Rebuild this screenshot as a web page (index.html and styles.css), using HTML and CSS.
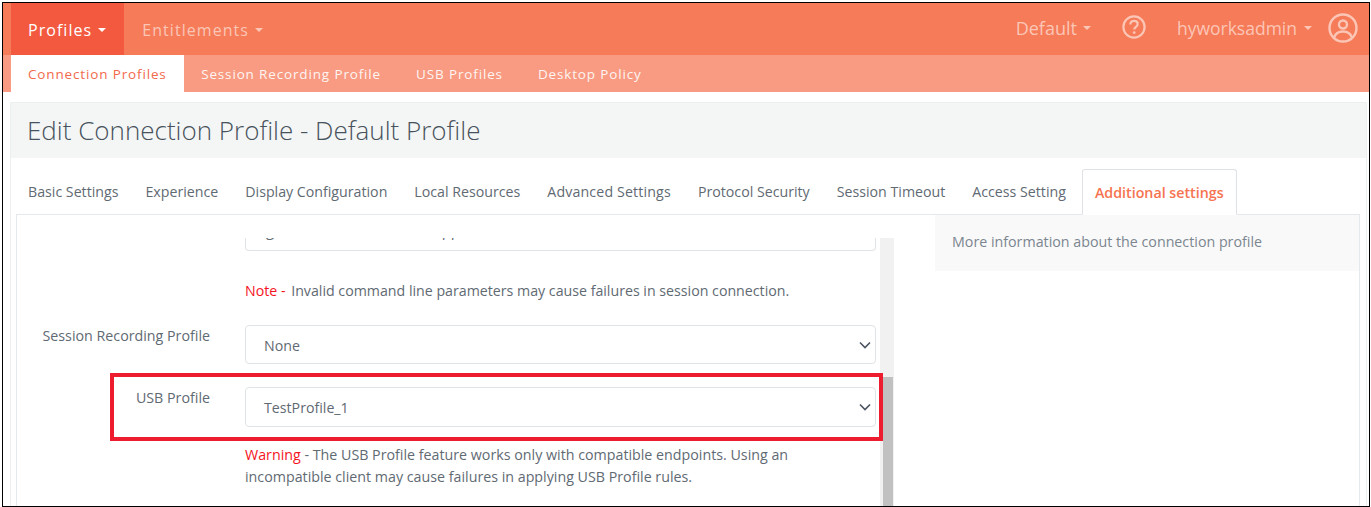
FILE: index.html
```html
<!DOCTYPE html>
<html lang="en">
<head>
<meta charset="utf-8">
<title>Edit Connection Profile</title>
<link rel="stylesheet" href="styles.css">
</head>
<body>
<div class="frame">
  <header class="topbar">
    <nav class="topnav">
      <a class="topitem active">Profiles <i class="caret"></i></a>
      <a class="topitem">Entitlements <i class="caret"></i></a>
    </nav>
    <div class="topright">
      <a class="rightitem default">Default <i class="caret"></i></a>
      <svg class="help" viewBox="0 0 24 24" width="24" height="24"><circle cx="12" cy="12" r="10.6" fill="none" stroke="currentColor" stroke-width="2.2"/><path d="M8.4 9.4c0-2.2 1.6-3.5 3.7-3.5s3.6 1.2 3.6 3.1c0 2.8-3.5 2.8-3.5 5.6" fill="none" stroke="currentColor" stroke-width="2.2"/><circle cx="12.2" cy="17.6" r="1.4" fill="currentColor"/></svg>
      <a class="rightitem user">hyworksadmin <i class="caret"></i></a>
      <svg class="avatar" viewBox="0 0 30 30" width="30" height="30"><circle cx="15" cy="15" r="13.5" fill="none" stroke="currentColor" stroke-width="2.4"/><circle cx="15" cy="11.5" r="4" fill="none" stroke="currentColor" stroke-width="2.4"/><path d="M6 24.5c1.5-4.2 5-6 9-6s7.500 1.800 9 6" fill="none" stroke="currentColor" stroke-width="2.4"/></svg>
    </div>
  </header>
  <nav class="subnav">
    <a class="subitem active">Connection Profiles</a>
    <a class="subitem">Session Recording Profile</a>
    <a class="subitem">USB Profiles</a>
    <a class="subitem">Desktop Policy</a>
  </nav>
  <main class="content">
    <div class="titlebar"><h1 class="title">Edit Connection Profile - Default Profile</h1></div>
    <ul class="tabs">
      <li class="tab">Basic Settings</li>
      <li class="tab">Experience</li>
      <li class="tab">Display Configuration</li>
      <li class="tab">Local Resources</li>
      <li class="tab wide">Advanced Settings</li>
      <li class="tab">Protocol Security</li>
      <li class="tab">Session Timeout</li>
      <li class="tab">Access Setting</li>
      <li class="tab current">Additional settings</li>
    </ul>
    <div class="panel">
      <div class="formwrap">
        <div class="form">
          <div class="cutfield"><span class="cuttext">g                               ,           pp</span></div>
          <p class="note first"><span class="red notelabel">Note - </span>Invalid command line parameters may cause failures in session connection.</p>
          <div class="row srp">
            <label class="label">Session Recording Profile</label>
            <div class="select">None<svg class="chev" viewBox="0 0 12 8" width="12" height="8"><path d="M1 1.500l5 5 5-5" fill="none" stroke="currentColor" stroke-width="1.600"/></svg></div>
          </div>
          <div class="row usb">
            <label class="label">USB Profile</label>
            <div class="select tall">TestProfile_1<svg class="chev" viewBox="0 0 12 8" width="12" height="8"><path d="M1 1.500l5 5 5-5" fill="none" stroke="currentColor" stroke-width="1.600"/></svg></div>
            <div class="redbox"></div>
          </div>
          <p class="note warn"><span class="red">Warning</span> - The USB Profile feature works only with compatible endpoints. Using an incompatible client may cause failures in applying USB Profile rules.</p>
        </div>
        <div class="scrollbar"><div class="thumb"></div></div>
      </div>
      <aside class="info">More information about the connection profile</aside>
    </div>
  </main>
</div>
</body>
</html>
```
FILE: styles.css
```css
* { box-sizing: border-box; }
html, body { margin: 0; padding: 0; background: #fff; }
body { width: 1371px; height: 507px; padding: 2px 0 0 2px; overflow: hidden; font-family: "Open Sans", "Noto Sans", sans-serif; color: #5f6a73; }
.frame { width: 1368px; height: 505px; border: 1px solid #000; overflow: hidden; display: flex; flex-direction: column; background: #fff; }
.topbar { height: 52px; flex: none; background: #f57b59; padding-left: 8px; display: flex; justify-content: space-between; align-items: stretch; }
.topnav { display: flex; }
.topitem { display: flex; align-items: center; color: #fbc6b6; font-size: 16px; letter-spacing: 1.05px; padding: 2px 17px 0 18px; }
.topitem.active { background: #f2593f; color: #fff; padding: 2px 18px 0 17px; }
.caret { display: inline-block; width: 0; height: 0; border-left: 4.500px solid transparent; border-right: 4.500px solid transparent; border-top: 4.500px solid currentColor; margin-left: 6px; }
.topright { display: flex; align-items: center; color: #fcc6b6; padding-right: 11px; }
.rightitem { font-size: 18px; display: flex; align-items: center; margin-bottom: 2px; }
.default { margin-right: 31px; }
.help { margin: 0 31px 4px 0; }
.user { margin-right: 16px; font-size: 17.500px; }
.user .caret { margin-left: 7px; }
.avatar { margin-bottom: 2px; }
.subnav { height: 37px; flex: none; background: #f89b82; padding-left: 8px; display: flex; }
.subitem { color: #fff; font-size: 13.500px; letter-spacing: 0.85px; padding: 0 17.500px; display: flex; align-items: center; opacity: .9; }
.subitem.active { background: #fff; color: #f2694c; opacity: 1; padding: 0 17px; }
.content { flex: 1; min-height: 0; margin: 10px 2px 0 7px; border: 1px solid #eceff0; border-width: 1px 1px 0 1px; display: flex; flex-direction: column; }
.titlebar { height: 55px; flex: none; background: #f4f6f6; display: flex; align-items: center; padding: 0 0 2px 16px; }
.title { margin: 0; font-weight: 300; font-size: 26px; color: #47525c; }
.tabs { list-style: none; margin: 11px 0 0 5px; padding: 0; height: 45px; flex: none; display: flex; font-size: 14.200px; color: #5f6a73; }
.tab { padding: 0 12px; margin-right: 3px; display: flex; align-items: center; white-space: nowrap; }
.tab.wide { letter-spacing: 0.15px; }
.tab.current { color: #f5734f; font-weight: 600; font-size: 14.250px; border: 1px solid #dee2e6; border-bottom: 1px solid #fff; border-radius: 3px 3px 0 0; background: #fff; margin-left: 1px; height: 46px; position: relative; z-index: 1; }
.panel { flex: 1; margin: 0 6px 0 5px; border: 1px solid #e6e9ec; border-bottom: none; display: flex; min-height: 0; }
.formwrap { width: 877px; padding-top: 23px; flex: none; display: flex; }
.form { width: 863px; flex: none; font-size: 14.250px; }
.cutfield { margin-left: 228px; width: 631px; height: 13px; border: 1px solid #dfe4e8; border-top: none; border-radius: 0 0 4px 4px; overflow: hidden; }
.cuttext { display: block; margin: -18px 0 0 20px; white-space: pre; font-size: 15px; line-height: 20px; }
.note { margin: 0 0 0 228px; width: 631px; line-height: 22px; }
.red { color: #f5141e; }
.notelabel { margin-right: 2px; }
.note.first { margin-top: 29px; font-size: 14.200px; }
.row { position: relative; display: flex; align-items: flex-start; }
.srp { margin-top: 23px; }
.usb { margin-top: 23px; }
.label { width: 193px; margin-right: 35px; text-align: right; line-height: 22px; flex: none; }
.select { width: 631px; height: 39px; border: 1px solid #dfe4e8; border-radius: 4px; padding: 1px 4px 0 18px; display: flex; align-items: center; justify-content: space-between; font-size: 14.200px; color: #5f6a73; background: #fff; }
.select.tall { height: 40px; }
.chev { color: #4b5560; margin-top: -1px; }
.redbox { position: absolute; left: 93px; top: -14px; width: 773px; height: 68px; border: 4px solid #ed1c2e; }
.note.warn { margin-top: 17px; }
.scrollbar { width: 14px; background: #f1f1f1; flex: none; display: flex; flex-direction: column; padding-top: 139px; }
.thumb { flex: 1; background: #c1c1c1; margin: 0 1px 0 3px; }
.info { margin-left: 41px; flex: 1; height: 56px; background: #f9f9f9; font-size: 14.250px; padding: 17px 0 0 17px; color: #7b8690; }
```
